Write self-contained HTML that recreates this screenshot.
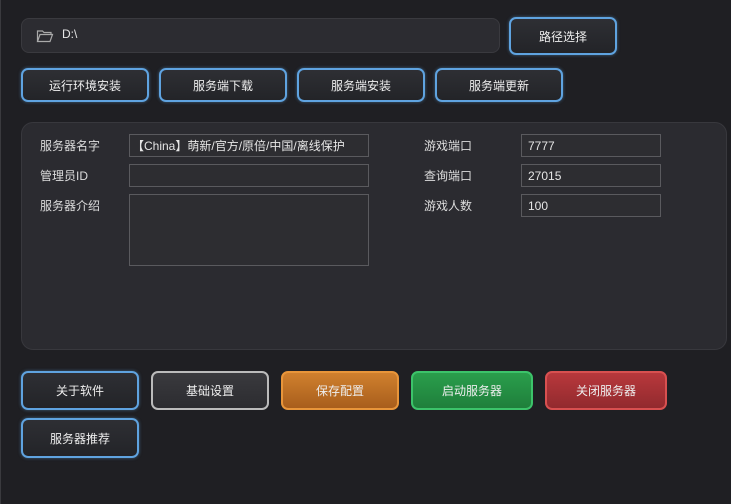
<!DOCTYPE html><html><head><meta charset="utf-8"><style>
body{margin:0;width:731px;height:504px;background:#1f1f23;font-family:"Liberation Sans","Noto Sans CJK SC",sans-serif;color:#e6e6e6;font-size:12px;position:relative;overflow:hidden}
.a{position:absolute;box-sizing:border-box}
.b{display:flex;align-items:center;justify-content:center;border-radius:7px;background:linear-gradient(#2e2f34,#232428);border:2px solid #5fa3e0;box-shadow:0 0 3px rgba(95,163,224,.5);color:#eee;font-size:12px}
.in{border:1px solid #5a5a5e;background:#2d2d31;padding-left:6px;display:flex;align-items:center;font-size:12px}
.l{font-size:12px;color:#ddd}
</style></head><body>
<div class="a" style="left:0;top:0;width:1px;height:504px;background:#3a3a3e"></div>
<div class="a" style="left:21px;top:18px;width:479px;height:35px;border-radius:8px;background:#2c2c31;border:1px solid #3a3a3f"></div>
<svg class="a" style="left:36px;top:29px" width="18" height="14" viewBox="0 0 18 14"><path d="M1.5 12.5V2h5l1.5 1.5h7V5M1.5 12.5L4 5.5h12.5L14 12.5z" fill="none" stroke="#aaa" stroke-width="1.2"/></svg>
<div class="a" style="left:62px;top:27px;font-size:12px">D:\</div>
<div class="a b" style="left:509px;top:17px;width:108px;height:38px">路径选择</div>
<div class="a b" style="left:21px;top:68px;width:128px;height:34px">运行环境安装</div>
<div class="a b" style="left:159px;top:68px;width:128px;height:34px">服务端下载</div>
<div class="a b" style="left:297px;top:68px;width:128px;height:34px">服务端安装</div>
<div class="a b" style="left:435px;top:68px;width:128px;height:34px">服务端更新</div>
<div class="a" style="left:21px;top:122px;width:706px;height:228px;border-radius:12px;background:#2b2b30;border:1px solid #38383d"></div>
<div class="a l" style="left:40px;top:137px">服务器名字</div>
<div class="a l" style="left:40px;top:167px">管理员ID</div>
<div class="a l" style="left:40px;top:197px">服务器介绍</div>
<div class="a in" style="left:129px;top:134px;width:240px;height:23px;padding-left:2px">【China】萌新/官方/原倍/中国/离线保护</div>
<div class="a in" style="left:129px;top:164px;width:240px;height:23px"></div>
<div class="a in" style="left:129px;top:194px;width:240px;height:72px"></div>
<div class="a l" style="left:424px;top:137px">游戏端口</div>
<div class="a l" style="left:424px;top:167px">查询端口</div>
<div class="a l" style="left:424px;top:197px">游戏人数</div>
<div class="a in" style="left:521px;top:134px;width:140px;height:23px">7777</div>
<div class="a in" style="left:521px;top:164px;width:140px;height:23px">27015</div>
<div class="a in" style="left:521px;top:194px;width:140px;height:23px">100</div>
<div class="a b" style="left:21px;top:371px;width:118px;height:39px">关于软件</div>
<div class="a b" style="left:151px;top:371px;width:118px;height:39px;border-color:#bbb;box-shadow:none;background:linear-gradient(#3a3a3e,#2c2c30)">基础设置</div>
<div class="a b" style="left:281px;top:371px;width:118px;height:39px;border-color:#e8953a;box-shadow:none;background:linear-gradient(#d0802e,#a85e1c)">保存配置</div>
<div class="a b" style="left:411px;top:371px;width:122px;height:39px;border-color:#3cc36a;box-shadow:none;background:linear-gradient(#2a9e4c,#1f7f3b)">启动服务器</div>
<div class="a b" style="left:545px;top:371px;width:122px;height:39px;border-color:#d85050;box-shadow:none;background:linear-gradient(#b8383c,#922a2e)">关闭服务器</div>
<div class="a b" style="left:21px;top:418px;width:118px;height:40px">服务器推荐</div>
</body></html>
